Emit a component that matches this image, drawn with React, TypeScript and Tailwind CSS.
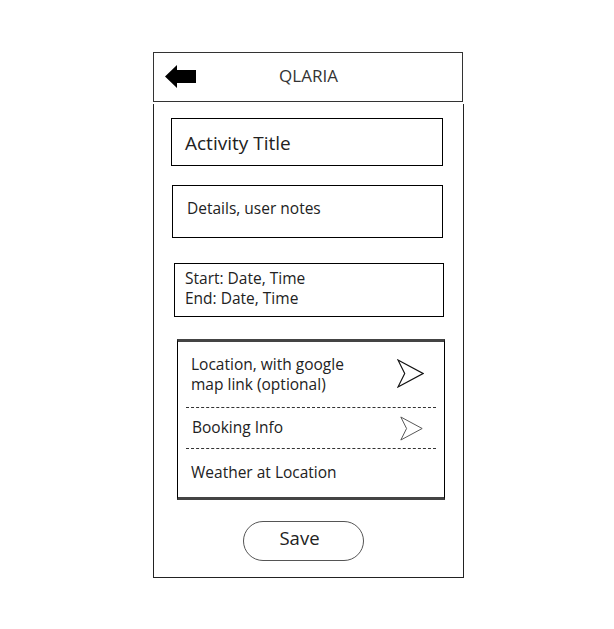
const SendOutline = ({ className, stroke }: { className: string; stroke: string }) => (
    <svg className={className} viewBox="0 0 28 30" fill="none">
        <path d="M1 1 L27 15 L1 29 L8 15 Z" stroke={stroke} strokeWidth="1.2" strokeLinejoin="miter" />
    </svg>
);

const BackArrow = () => (
    <svg width="31" height="23" viewBox="0 0 31 23">
        <path d="M0 11.5 L12 0 L12 5 L31 5 L31 18 L12 18 L12 23 Z" fill="#000" />
    </svg>
);

const App = () => {
    return (
        <div className="w-[614px] h-[629px] bg-white pt-[52px] text-[#222]" style={{ fontFamily: '"Open Sans", "Noto Sans", sans-serif' }}>
            <div className="ml-[153px] w-[311px]">
                {/* header */}
                <div className="relative w-[310px] h-[50px] border border-[#333] flex items-center">
                    <div className="ml-[11px] mt-[-2px]">
                        <BackArrow />
                    </div>
                    <div className="absolute left-0 right-0 top-0 bottom-0 flex items-center justify-center text-[17px] text-[#333] pointer-events-none pl-[1px] pb-[2px]">
                        QLARIA
                    </div>
                </div>

                {/* body */}
                <div className="mt-[2px] h-[474px] border-x border-b border-[#222] flex flex-col pt-[14px]">
                    <div className="ml-[17px] w-[272px] h-[48px] border border-black flex items-center pl-[13px] pt-[2px] text-[19px]">
                        Activity Title
                    </div>

                    <div className="ml-[18px] mt-[19px] w-[271px] h-[53px] border border-black pl-[14px] pt-[12px] text-[15.5px] leading-[20px]">
                        Details, user notes
                    </div>

                    <div className="ml-[20px] mt-[25px] w-[270px] h-[54px] border border-black pl-[10px] pt-[4px] text-[15.5px] leading-[20px]">
                        <div>Start: Date, Time</div>
                        <div>End: Date, Time</div>
                    </div>

                    <div className="ml-[23px] mt-[22px] w-[268px] h-[161px] border-x border-black border-y-[3px] border-y-[#444] flex flex-col text-[15.5px] leading-[20px]">
                        <div className="h-[65px] flex items-center justify-between pl-[13px] pr-[20px] pb-[1px]">
                            <div>
                                <div>Location, with google</div>
                                <div>map link (optional)</div>
                            </div>
                            <SendOutline className="w-[27px] h-[29px] mb-[2px]" stroke="#111" />
                        </div>
                        <div className="mx-[8px] border-t border-dashed border-[#333]" />
                        <div className="h-[40px] flex items-center justify-between pl-[14px] pr-[21px]">
                            <div className="mb-[2px]">Booking Info</div>
                            <SendOutline className="w-[23px] h-[25px]" stroke="#555" />
                        </div>
                        <div className="mx-[8px] border-t border-dashed border-[#333]" />
                        <div className="flex-1 flex items-center pl-[13px] pb-[2px]">
                            Weather at Location
                        </div>
                    </div>

                    <div className="ml-[89px] mt-[21px] w-[121px] h-[40px] rounded-full border border-[#555] flex items-center justify-center pr-[8px] pb-[7px] text-[18.5px]">
                        Save
                    </div>
                </div>
            </div>
        </div>
    );
};

export default App;
